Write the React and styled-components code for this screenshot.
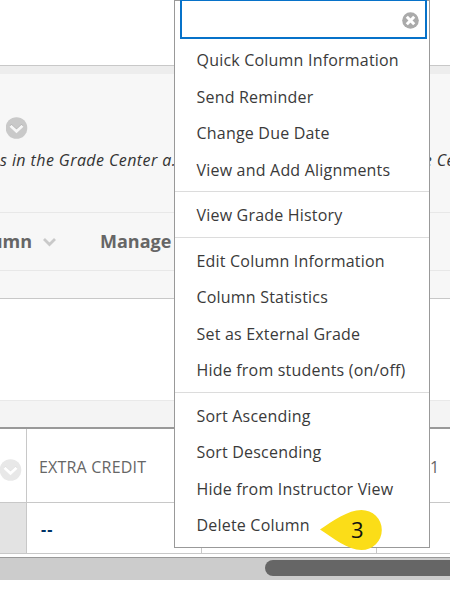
import React from 'react';
import styled, { createGlobalStyle } from 'styled-components';

const GlobalStyle = createGlobalStyle`
  * {
    box-sizing: border-box;
  }

  body {
    background: #fff;
    font-family: 'Open Sans', 'Noto Sans', sans-serif;
    margin: 0;
    overflow: hidden;
  }
`;

const Page = styled.div`
  height: 602px;
  overflow: hidden;
  position: relative;
  white-space: nowrap;
  width: 450px;
`;

const TopBar = styled.div`
  background: #fff;
  border-bottom: 1px solid #c8c8c8;
  height: 66px;
`;

const TopBarShade = styled.div`
  background: #ededed;
  height: 8px;
`;

const PageHeader = styled.div`
  background: #f7f7f7;
  border-bottom: 1px solid #e8e8e8;
  display: flex;
  flex-direction: column;
  height: 139px;
  padding-top: 43px;
`;

const TitleRow = styled.div`
  display: flex;
  height: 22px;
  padding-left: 6px;
`;

const Instructions = styled.div`
  color: #333;
  display: flex;
  font-size: 16px;
  font-style: italic;
  justify-content: space-between;
  letter-spacing: 0.42px;
  line-height: 22px;
  padding-top: 10px;
`;

const InstructionsEnd = styled.span`
  flex: none;
  margin-right: -5px;
`;

const ActionBar = styled.div`
  align-items: center;
  background: #f7f7f7;
  border-bottom: 1px solid #e8e8e8;
  color: #666;
  display: flex;
  font-size: 18px;
  font-weight: 700;
  height: 58px;
  line-height: 24px;
  padding-bottom: 2px;
`;

const ActionClip = styled.div`
  display: flex;
  flex: none;
  justify-content: flex-end;
  width: 32px;
`;

const ActionArrow = styled.svg`
  flex: none;
  height: 10px;
  margin: 2px 44px 0 11px;
  width: 13px;
`;

const ActionFooter = styled.div`
  background: #f7f7f7;
  border-bottom: 1px solid #c8c8c8;
  height: 28px;
`;

const FilterArea = styled.div`
  border-bottom: 1px solid #e9e9e9;
  height: 102px;
`;

const GridTop = styled.div`
  background: #f4f4f4;
  border-bottom: 2px solid #999;
  height: 28px;
`;

const GridRow = styled.div`
  border-bottom: 1px solid #c8c8c8;
  display: grid;
  grid-template-columns: 27px 175px 175px 175px;
  height: ${({ $height }) => $height}px;
`;

const GridCell = styled.div`
  align-items: center;
  background: ${({ $shaded }) => ($shaded ? '#e3e3e3' : '#fff')};
  border-right: 1px solid #c8c8c8;
  color: #666;
  display: flex;
  font-size: 16px;
  letter-spacing: 0.2px;
  padding: 2px 0 0 ${({ $indent }) => $indent || 0}px;
`;

const Score = styled.span`
  color: #003366;
  font-weight: 700;
  letter-spacing: 1px;
`;

const HeaderMenuIcon = styled.span`
  display: flex;
  margin: 7px 0 0;
`;

const ScrollTrack = styled.div`
  background: #ccc;
  border-top: 1px solid #999;
  height: 23px;
  margin-top: 3px;
  padding: 2px 0 4px 265px;
`;

const ScrollThumb = styled.div`
  background: #666;
  border-radius: 8px 0 0 8px;
  height: 16px;
`;

const Menu = styled.div`
  background: #fff;
  border: 1px solid #999;
  height: 548px;
  left: 174px;
  position: absolute;
  top: 0;
  width: 256px;
`;

const MenuHeader = styled.div`
  align-items: center;
  border: 2px solid #0772c9;
  display: flex;
  height: 40px;
  justify-content: flex-end;
  margin: -2px 2px 0 5px;
  padding: 3px 6px 0 0;
`;

const MenuGroup = styled.div`
  border-bottom: ${({ $last }) => ($last ? 0 : 1)}px solid #dcdcdc;
  padding: ${({ $padding }) => $padding};
`;

const MenuItem = styled.div`
  color: #3a3a3a;
  font-size: 16px;
  height: 36.5px;
  letter-spacing: 0.2px;
  line-height: 36.5px;
`;

const Callout = styled.div`
  height: 42px;
  left: 319px;
  position: absolute;
  top: 509px;
  width: 64px;
`;

const CalloutShape = styled.svg`
  display: block;
`;

const CalloutNumber = styled.span`
  color: #111;
  font-size: 22px;
  left: 32px;
  line-height: 30px;
  position: absolute;
  top: 5px;
`;

const MENU_GROUPS = [
  {
    items: ['Quick Column Information', 'Send Reminder', 'Change Due Date', 'View and Add Alignments'],
    padding: '3px 0 3px 21.5px',
  },
  {
    items: ['View Grade History'],
    padding: '4.5px 0 4px 21.5px',
  },
  {
    items: ['Edit Column Information', 'Column Statistics', 'Set as External Grade', 'Hide from students (on/off)'],
    padding: '4.5px 0 3.5px 21.5px',
  },
  {
    items: ['Sort Ascending', 'Sort Descending', 'Hide from Instructor View', 'Delete Column'],
    padding: '4.5px 0 0 21.5px',
  },
];

const RoundChevron = ({ fill, stroke, shadow }) => (
  <svg width="22" height="22" viewBox="0 0 22 22">
    <circle cx="10.5" cy="11" r="10.8" fill={fill} />
    <path d="M4.5 8l6 5.5 6-5.5" fill="none" stroke={shadow} strokeWidth="2.6" />
    <path d="M4.5 8.8l6 5.5 6-5.5" fill="none" stroke={stroke} strokeWidth="2.8" />
  </svg>
);

const CloseIcon = () => (
  <svg width="17" height="17" viewBox="0 0 17 17">
    <circle cx="8.5" cy="8.5" r="8.3" fill="#aaa" />
    <path d="M4.8 4.8l7.4 7.4M12.2 4.8l-7.4 7.4" stroke="#fff" strokeWidth="3" />
  </svg>
);

const ColumnMenu = () => (
  <Menu>
    <MenuHeader><CloseIcon /></MenuHeader>
    {
      MENU_GROUPS.map(({ items, padding }, index) => (
        <MenuGroup
          key={items[0]}
          $last={index === MENU_GROUPS.length - 1}
          $padding={padding}
        >
          { items.map((item) => <MenuItem key={item}>{ item }</MenuItem>) }
        </MenuGroup>
      ))
    }
  </Menu>
);

const App = () => (
  <>
    <GlobalStyle />
    <Page>
      <TopBar />
      <TopBarShade />
      <PageHeader>
        <TitleRow>
          <RoundChevron fill="#c9c9c9" stroke="#f7f7f7" shadow="#b0b0b0" />
        </TitleRow>
        <Instructions>
          <span>s in the Grade Center a.</span>
          <InstructionsEnd>e Ce</InstructionsEnd>
        </Instructions>
      </PageHeader>
      <ActionBar>
        <ActionClip>umn</ActionClip>
        <ActionArrow viewBox="0 0 13 10">
          <path d="M1 2l5.5 5.5L12 2" fill="none" stroke="#c9c9c9" strokeWidth="2.8" />
        </ActionArrow>
        <span>Manage</span>
      </ActionBar>
      <ActionFooter />
      <FilterArea />
      <GridTop />
      <GridRow $height={74}>
        <GridCell>
          <HeaderMenuIcon>
            <RoundChevron fill="#e8e8e8" stroke="#fff" shadow="#dedede" />
          </HeaderMenuIcon>
        </GridCell>
        <GridCell $indent={12}>EXTRA CREDIT</GridCell>
        <GridCell />
        <GridCell $indent={53}>1</GridCell>
      </GridRow>
      <GridRow $height={51}>
        <GridCell $shaded />
        <GridCell $indent={14}><Score>--</Score></GridCell>
        <GridCell />
        <GridCell />
      </GridRow>
      <ScrollTrack>
        <ScrollThumb />
      </ScrollTrack>
      <ColumnMenu />
      <Callout>
        <CalloutShape width="64" height="42" viewBox="0 0 64 42">
          <path d="M1 20.5C14 12 29 1 42.5 1a20.3 20 0 0 1 0 40C29 41 14 29 1 20.5z" fill="#fbdd18" />
        </CalloutShape>
        <CalloutNumber>3</CalloutNumber>
      </Callout>
    </Page>
  </>
);

export default App;
